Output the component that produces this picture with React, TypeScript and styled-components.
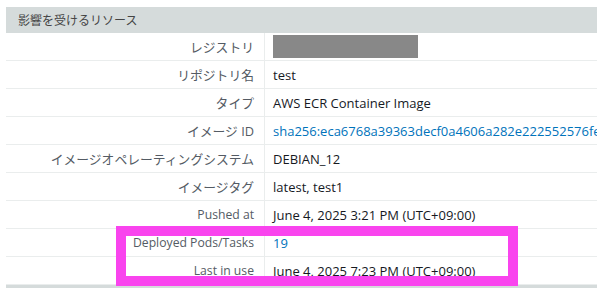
import React from "react";
import styled, { createGlobalStyle } from "styled-components";

const GlobalStyle = createGlobalStyle`
  html, body {
    margin: 0;
    padding: 0;
    background: #ffffff;
    overflow: hidden;
  }
  body {
    font-family: "Open Sans", "Noto Sans CJK JP", sans-serif;
    font-size: 13px;
    color: #16191f;
  }
`;

const Page = styled.div`
  position: relative;
  padding: 7px 0 0 6px;
  width: 620px;
`;

const Panel = styled.section`
  width: 614px;
  border-bottom: 3px solid #d5dbdb;
`;

const PanelHeader = styled.h2`
  margin: 0;
  height: 26px;
  display: flex;
  align-items: center;
  padding-left: 12px;
  background: #d5dbdb;
  color: #444444;
  font-size: 12px;
  font-weight: 400;
`;

const Table = styled.div`
  display: grid;
  grid-template-columns: 259px 1fr;
`;

const Label = styled.div<{ $latin?: boolean }>`
  height: 27px;
  border-bottom: 1px solid #eaeded;
  border-right: 1px solid #eaeded;
  display: flex;
  align-items: center;
  justify-content: flex-end;
  padding-right: 10px;
  color: #545b64;
  font-size: ${(p) => (p.$latin ? "12.2px" : "12.8px")};
  white-space: nowrap;
`;

const Value = styled.div`
  height: 27px;
  border-bottom: 1px solid #eaeded;
  display: flex;
  align-items: center;
  padding-left: 8px;
  white-space: nowrap;
  overflow: hidden;
  color: #16191f;
`;

const Link = styled.a`
  color: #0073bb;
  text-decoration: none;
`;

const Redacted = styled.span`
  display: block;
  width: 145px;
  height: 23px;
  background: #888888;
`;

const Highlight = styled.div`
  position: absolute;
  left: 116px;
  top: 226px;
  width: 382px;
  height: 40px;
  border: 10px solid #f944ee;
  pointer-events: none;
`;

type Row = { label: string; value: React.ReactNode };

const rows: Row[] = [
  { label: "レジストリ", value: <Redacted /> },
  { label: "リポジトリ名", value: "test" },
  { label: "タイプ", value: "AWS ECR Container Image" },
  {
    label: "イメージ ID",
    value: <Link href="#">sha256:eca6768a39363decf0a4606a282e222552576fed3b1</Link>,
  },
  { label: "イメージオペレーティングシステム", value: "DEBIAN_12" },
  { label: "イメージタグ", value: "latest, test1" },
  { label: "Pushed at", value: "June 4, 2025 3:21 PM (UTC+09:00)" },
  { label: "Deployed Pods/Tasks", value: <Link href="#">19</Link> },
  { label: "Last in use", value: "June 4, 2025 7:23 PM (UTC+09:00)" },
];

const isLatin = (s: string) => /^[\x00-\x7F]+$/.test(s);

export default function App() {
  return (
    <>
      <GlobalStyle />
      <Page>
        <Panel>
          <PanelHeader>影響を受けるリソース</PanelHeader>
          <Table>
            {rows.map((r) => (
              <React.Fragment key={r.label}>
                <Label $latin={isLatin(r.label)}>{r.label}</Label>
                <Value>{r.value}</Value>
              </React.Fragment>
            ))}
          </Table>
        </Panel>
        <Highlight />
      </Page>
    </>
  );
}
